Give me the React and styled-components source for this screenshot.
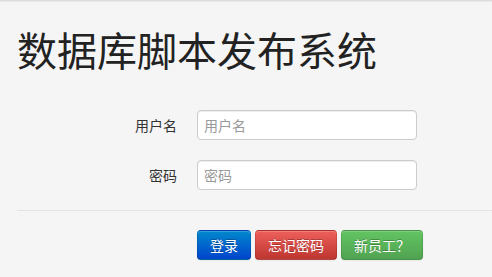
import React from "react";
import styled, { createGlobalStyle } from "styled-components";

const Global = createGlobalStyle`
  html, body { margin: 0; padding: 0; background: #f5f5f5; }
  body {
    font-family: "Noto Sans CJK SC", "Liberation Sans", sans-serif;
    font-size: 14px;
    color: #333;
  }
`;

const Page = styled.div`
  min-height: 277px;
  background: #f5f5f5;
  border-top: 1px solid #dcdcdc;
  box-shadow: inset 0 1px 1px rgba(0, 0, 0, 0.05);
  box-sizing: border-box;
  padding-left: 17px;
  overflow: hidden;
`;

const Title = styled.h1`
  margin: 27px 0 0 0;
  font-family: "Noto Sans CJK SC", serif;
  font-weight: 400;
  font-size: 40px;
  line-height: 42px;
  letter-spacing: 0;
  color: #222;
  white-space: nowrap;
`;

const Form = styled.form`
  margin-top: 40px;
`;

const Row = styled.div`
  display: flex;
  align-items: center;
  margin-bottom: 20px;
`;

const Label = styled.label`
  width: 160px;
  text-align: right;
  font-size: 14px;
  line-height: 20px;
  color: #333;
`;

const Input = styled.input`
  margin-left: 20px;
  box-sizing: border-box;
  width: 220px;
  height: 30px;
  padding: 4px 6px;
  font-family: "Noto Sans CJK SC", sans-serif;
  font-size: 14px;
  color: #555;
  background: #fff;
  border: 1px solid #ccc;
  border-radius: 4px;
  box-shadow: inset 0 1px 1px rgba(0, 0, 0, 0.075);
  outline: none;
  &::placeholder { color: #999; }
`;

const Actions = styled.div`
  display: flex;
  gap: 4px;
  border-top: 1px solid #e3e3e3;
  padding: 19px 0 20px 180px;
`;

const palette = {
  primary: ["#0088cc", "#0044cc"],
  danger: ["#ee5f5b", "#bd362f"],
  success: ["#62c462", "#51a351"],
};

const Button = styled.button`
  box-sizing: border-box;
  height: 30px;
  padding: 0 12px;
  font-family: "Noto Sans CJK SC", sans-serif;
  font-size: 14px;
  line-height: 28px;
  color: #fff;
  text-shadow: 0 -1px 0 rgba(0, 0, 0, 0.25);
  background-image: linear-gradient(to bottom, ${(p) => palette[p.$variant][0]}, ${(p) => palette[p.$variant][1]});
  border: 1px solid rgba(0, 0, 0, 0.1);
  border-bottom-color: rgba(0, 0, 0, 0.25);
  border-radius: 4px;
  box-shadow: inset 0 1px 0 rgba(255, 255, 255, 0.2), 0 1px 2px rgba(0, 0, 0, 0.05);
  cursor: pointer;
`;

export default function App() {
  return (
    <>
      <Global />
      <Page>
        <Title>数据库脚本发布系统</Title>
        <Form onSubmit={(e) => e.preventDefault()}>
          <Row>
            <Label>用户名</Label>
            <Input type="text" placeholder="用户名" />
          </Row>
          <Row>
            <Label>密码</Label>
            <Input type="password" placeholder="密码" />
          </Row>
          <Actions>
            <Button $variant="primary">登录</Button>
            <Button $variant="danger">忘记密码</Button>
            <Button $variant="success">新员工？</Button>
          </Actions>
        </Form>
      </Page>
    </>
  );
}
